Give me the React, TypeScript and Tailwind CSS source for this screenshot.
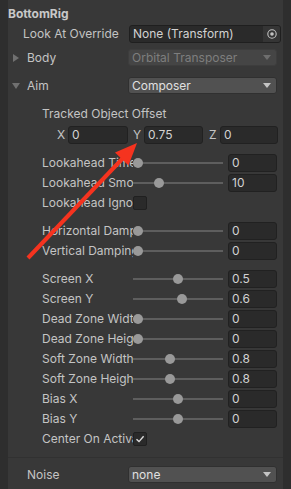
import React from "react";

const font = { fontFamily: "Inter, 'Noto Sans', sans-serif" };

const Field = ({ value, className = "" }: { value: string; className?: string }) => (
  <div
    className={`h-[18px] bg-[#2a2a2a] border border-[#212121] rounded-[3px] pl-[3px] text-[12px] leading-[16px] text-[#d2d2d2] overflow-hidden whitespace-nowrap ${className}`}
  >
    {value}
  </div>
);

const Caret = ({ dim }: { dim?: boolean }) => (
  <svg width="8" height="5" viewBox="0 0 8 5" className="shrink-0">
    <path d="M0 0 L8 0 L4 5 Z" fill={dim ? "#6e6e6e" : "#c4c4c4"} />
  </svg>
);

const Dropdown = ({ value, dim }: { value: string; dim?: boolean }) => (
  <div
    className={`ml-auto mr-[6px] w-[149px] h-[17px] rounded-[3px] border flex items-center pl-[3px] pr-[5px] text-[12px] ${
      dim
        ? "bg-[#454545] border-[#3d3d3d] text-[#7e7e7e]"
        : "bg-[#515151] border-[#303030] text-[#e0e0e0]"
    }`}
  >
    <span className="flex-1 whitespace-nowrap overflow-hidden">{value}</span>
    <Caret dim={dim} />
  </div>
);

const Foldout = ({ open }: { open?: boolean }) => (
  <svg width="8" height="8" viewBox="0 0 8 8" className="shrink-0">
    {open ? <path d="M0 1 L8 1 L4 7 Z" fill="#707070" /> : <path d="M1 0 L7 4 L1 8 Z" fill="#707070" />}
  </svg>
);

const Label = ({ text }: { text: string }) => (
  <div className="w-[91px] shrink-0 overflow-hidden whitespace-nowrap text-[12px] text-[#c4c4c4]">{text}</div>
);

// knob = px from track left to knob centre (track is 90px wide)
const SliderRow = ({ label, value, knob }: { label: string; value: string; knob: number }) => (
  <div className="h-[18px] flex items-center">
    <Label text={label} />
    <div className="relative w-[90px] h-[18px] shrink-0">
      <div className="absolute left-0 right-0 top-[8px] h-[2px] bg-[#5e5e5e]" />
      <div
        className="absolute top-[4px] w-[10px] h-[10px] rounded-full bg-[#999999]"
        style={{ left: knob - 5 }}
      />
    </div>
    <Field value={value} className="ml-[5px] w-[49px]" />
  </div>
);

const CheckRow = ({ label, checked }: { label: string; checked?: boolean }) => (
  <div className="h-[18px] flex items-center">
    <Label text={label} />
    <div className="w-[14px] h-[14px] bg-[#2a2a2a] border border-[#202020] rounded-[2px] flex items-center justify-center">
      {checked && (
        <svg width="10" height="10" viewBox="0 0 10 10">
          <path d="M1.5 5.2 L4 7.6 L8.6 2.2" stroke="#dcdcdc" strokeWidth="1.4" fill="none" />
        </svg>
      )}
    </div>
  </div>
);

export default function App() {
  return (
    <div className="relative w-[291px] h-[489px] bg-[#2e2e2e] overflow-hidden" style={font}>
      <div className="ml-[8px] w-[275px] h-full bg-[#383838] flex flex-col">
        <div className="pt-[5px] h-[24px] text-[12px] font-bold text-[#c8c8c8]">BottomRig</div>

        <div className="mt-[1px] h-[18px] flex items-center">
          <div className="pl-[15px] w-[121px] text-[12px] text-[#c4c4c4] whitespace-nowrap">Look At Override</div>
          <div className="w-[152px] h-[18px] bg-[#2a2a2a] border border-[#1f1f1f] rounded-[3px] flex items-center overflow-hidden">
            <span className="flex-1 pl-[3px] text-[12px] text-[#d2d2d2] whitespace-nowrap">None (Transform)</span>
            <div className="w-[17px] h-full bg-[#353535] flex items-center justify-center">
              <svg width="10" height="10" viewBox="0 0 10 10">
                <circle cx="5" cy="5" r="4.2" stroke="#c4c4c4" strokeWidth="1.1" fill="none" />
                <circle cx="5" cy="5" r="1.8" fill="#c4c4c4" />
              </svg>
            </div>
          </div>
        </div>

        <div className="mt-[6px] h-[17px] flex items-center">
          <div className="pl-[4px] w-[19px]">
            <Foldout />
          </div>
          <span className="text-[12px] text-[#c4c4c4]">Body</span>
          <Dropdown value="Orbital Transposer" dim />
        </div>

        <div className="mt-[11px] h-[17px] flex items-center">
          <div className="pl-[4px] w-[19px]">
            <Foldout open />
          </div>
          <span className="text-[12px] text-[#c4c4c4]">Aim</span>
          <Dropdown value="Composer" />
        </div>

        <div className="mt-[7px] pl-[34px] pb-[9px] border-b border-[#313131] flex flex-col">
          <div className="h-[18px] pt-[5px] text-[12px] text-[#c4c4c4] leading-[16px] box-content">Tracked Object Offset</div>
          <div className="mt-[2px] h-[18px] flex items-center text-[12px] text-[#c4c4c4]">
            <span className="w-[26px] pl-[15px]">X</span>
            <Field value="0" className="w-[60px]" />
            <span className="w-[16px] pl-[5px]">Y</span>
            <Field value="0.75" className="w-[59px]" />
            <span className="w-[17px] pl-[6px]">Z</span>
            <Field value="0" className="w-[58px]" />
          </div>

          <div className="mt-[10px] flex flex-col gap-[2px]">
            <SliderRow label="Lookahead Time" value="0" knob={5} />
            <SliderRow label="Lookahead Smoothing" value="10" knob={26} />
            <CheckRow label="Lookahead Ignore Y" />
          </div>

          <div className="mt-[10px] flex flex-col gap-[2px]">
            <SliderRow label="Horizontal Damping" value="0" knob={5} />
            <SliderRow label="Vertical Damping" value="0" knob={5} />
          </div>

          <div className="mt-[10px] flex flex-col gap-[2px]">
            <SliderRow label="Screen X" value="0.5" knob={45} />
            <SliderRow label="Screen Y" value="0.6" knob={49} />
            <SliderRow label="Dead Zone Width" value="0" knob={5} />
            <SliderRow label="Dead Zone Height" value="0" knob={5} />
            <SliderRow label="Soft Zone Width" value="0.8" knob={37} />
            <SliderRow label="Soft Zone Height" value="0.8" knob={37} />
            <SliderRow label="Bias X" value="0" knob={45} />
            <SliderRow label="Bias Y" value="0" knob={45} />
            <CheckRow label="Center On Activate" checked />
          </div>
        </div>

        <div className="mt-[8px] h-[17px] flex items-center">
          <span className="pl-[19px] text-[12px] text-[#c4c4c4]">Noise</span>
          <Dropdown value="none" />
        </div>
      </div>

      <svg className="absolute left-0 top-0 pointer-events-none" width="291" height="489">
        <line x1="28" y1="258" x2="124" y2="157" stroke="#f5331f" strokeWidth="4" />
        <path d="M137 143 L115 152.5 L128.5 165.5 Z" fill="#f5331f" />
      </svg>
    </div>
  );
}
